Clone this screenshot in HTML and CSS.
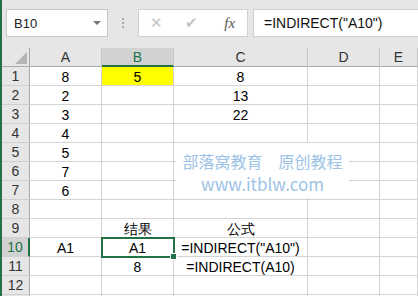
FILE: index.html
```html
<!DOCTYPE html>
<html lang="zh">
<head>
  <meta charset="utf-8">
  <title>INDIRECT</title>
  <link rel="stylesheet" href="styles.css">
</head>
<body>
  <div class="app">
    <div class="toolbar">
      <div class="namebox">
        <span>B10</span>
        <span class="arrow"></span>
      </div>
      <div class="dots"><i></i><i></i><i></i></div>
      <div class="buttons">
        <span class="btn">&#x2715;</span>
        <span class="btn">&#x2714;</span>
        <span class="btn fx">fx</span>
      </div>
      <div class="formula">=INDIRECT("A10")</div>
    </div>

    <div class="sheet">
      <div class="row head">
        <div class="rh corner"><span class="tri"></span></div>
        <div class="cell ca">A</div>
        <div class="cell cb active">B</div>
        <div class="cell cc">C</div>
        <div class="cell cd">D</div>
        <div class="cell ce">E</div>
      </div>
      <div class="row">
        <div class="rh">1</div>
        <div class="cell ca">8</div>
        <div class="cell cb yellow">5</div>
        <div class="cell cc">8</div>
        <div class="cell cd"></div>
        <div class="cell ce"></div>
      </div>
      <div class="row">
        <div class="rh">2</div>
        <div class="cell ca">2</div>
        <div class="cell cb"></div>
        <div class="cell cc">13</div>
        <div class="cell cd"></div>
        <div class="cell ce"></div>
      </div>
      <div class="row">
        <div class="rh">3</div>
        <div class="cell ca">3</div>
        <div class="cell cb"></div>
        <div class="cell cc">22</div>
        <div class="cell cd"></div>
        <div class="cell ce"></div>
      </div>
      <div class="row">
        <div class="rh">4</div>
        <div class="cell ca">4</div>
        <div class="cell cb"></div>
        <div class="cell cc"></div>
        <div class="cell cd"></div>
        <div class="cell ce"></div>
      </div>
      <div class="row">
        <div class="rh">5</div>
        <div class="cell ca">5</div>
        <div class="cell cb"></div>
        <div class="cell cc"></div>
        <div class="cell cd"></div>
        <div class="cell ce"></div>
      </div>
      <div class="row">
        <div class="rh">6</div>
        <div class="cell ca">7</div>
        <div class="cell cb"></div>
        <div class="cell cc"></div>
        <div class="cell cd"></div>
        <div class="cell ce"></div>
      </div>
      <div class="row">
        <div class="rh">7</div>
        <div class="cell ca">6</div>
        <div class="cell cb"></div>
        <div class="cell cc"></div>
        <div class="cell cd"></div>
        <div class="cell ce"></div>
      </div>
      <div class="row">
        <div class="rh">8</div>
        <div class="cell ca"></div>
        <div class="cell cb"></div>
        <div class="cell cc"></div>
        <div class="cell cd"></div>
        <div class="cell ce"></div>
      </div>
      <div class="row">
        <div class="rh">9</div>
        <div class="cell ca"></div>
        <div class="cell cb">结果</div>
        <div class="cell cc">公式</div>
        <div class="cell cd"></div>
        <div class="cell ce"></div>
      </div>
      <div class="row">
        <div class="rh active">10</div>
        <div class="cell ca">A1</div>
        <div class="cell cb selected">A1<span class="handle"></span></div>
        <div class="cell cc">=INDIRECT("A10")</div>
        <div class="cell cd"></div>
        <div class="cell ce"></div>
      </div>
      <div class="row">
        <div class="rh">11</div>
        <div class="cell ca"></div>
        <div class="cell cb">8</div>
        <div class="cell cc">=INDIRECT(A10)</div>
        <div class="cell cd"></div>
        <div class="cell ce"></div>
      </div>
      <div class="row">
        <div class="rh">12</div>
        <div class="cell ca"></div>
        <div class="cell cb"></div>
        <div class="cell cc"></div>
        <div class="cell cd"></div>
        <div class="cell ce"></div>
      </div>
      <div class="row">
        <div class="rh"></div>
        <div class="cell ca"></div>
        <div class="cell cb"></div>
        <div class="cell cc"></div>
        <div class="cell cd"></div>
        <div class="cell ce"></div>
      </div>

      <div class="watermark">
        <p class="wm-title">部落窝教育&emsp;原创教程</p>
        <p class="wm-url">www.itblw.com</p>
      </div>
    </div>
  </div>
</body>
</html>
```

FILE: styles.css
```css
body {
  margin: 0;
  background: #e6e6e6;
  font-family: "Liberation Sans", Arial, sans-serif;
  overflow: hidden;
}

.app {
  border-left: 2px solid #217346;
  height: 296px;
  overflow: hidden;
}

.toolbar {
  display: flex;
  align-items: center;
  height: 48px;
  padding-left: 4px;
  box-sizing: border-box;
  padding-bottom: 2px;
}

.namebox {
  display: flex;
  align-items: center;
  justify-content: space-between;
  box-sizing: border-box;
  width: 102px;
  height: 28px;
  padding: 0 6px 0 7px;
  background: #fff;
  border: 1px solid #c6c6c6;
  font-size: 13px;
  color: #222;
}

.arrow {
  width: 0;
  height: 0;
  border-left: 4px solid transparent;
  border-right: 4px solid transparent;
  border-top: 4px solid #777;
}

.dots {
  display: flex;
  flex-direction: column;
  gap: 2px;
  margin: 0 14px 0 14px;
}

.dots i {
  display: block;
  width: 2px;
  height: 2px;
  background: #a8a8a8;
}

.buttons {
  display: flex;
  align-items: center;
  box-sizing: border-box;
  width: 110px;
  height: 28px;
  background: #fff;
  border: 1px solid #d0d0d0;
}

.btn {
  width: 35px;
  text-align: center;
  color: #c4c4c4;
  font-size: 15px;
}

.btn.fx {
  font-family: "Liberation Serif", serif;
  font-style: italic;
  color: #555;
  font-size: 15px;
  padding-left: 4px;
}

.formula {
  flex: 1;
  display: flex;
  align-items: center;
  box-sizing: border-box;
  height: 28px;
  margin-left: 5px;
  padding-left: 10px;
  background: #fff;
  border: 1px solid #d0d0d0;
  border-right: none;
  font-size: 14px;
  color: #111;
}

.sheet {
  position: relative;
  background: #fff;
}

.row {
  display: flex;
  height: 19px;
}

.rh,
.cell {
  box-sizing: border-box;
  height: 19px;
  line-height: 19px;
  text-align: center;
  white-space: nowrap;
  font-size: 14px;
  color: #000;
}

.rh {
  width: 28px;
  flex: none;
  background: #e6e6e6;
  border-right: 1px solid #ababab;
  border-bottom: 1px solid #d0d0d0;
  color: #333;
}

.rh.active {
  background: #d2d2d2;
  border-right: 2px solid #217346;
  color: #217346;
}

.cell {
  flex: none;
  border-right: 1px solid #d4d4d4;
  border-bottom: 1px solid #d4d4d4;
  padding-top: 1px;
}

.ca { width: 72px; }
.cb { width: 72px; }
.cc { width: 134px; }
.cd { width: 72px; }
.ce { flex: 1; }

.head .cell {
  background: #e6e6e6;
  border-right: 1px solid #c6c6c6;
  border-bottom: 1px solid #ababab;
  color: #333;
  padding-top: 0;
}

.head .rh {
  border-bottom: 1px solid #ababab;
}

.head .cell.active {
  background: #d2d2d2;
  border-bottom: 2px solid #217346;
  color: #217346;
}

.corner {
  position: relative;
}

.tri {
  position: absolute;
  right: 2px;
  bottom: 2px;
  width: 0;
  height: 0;
  border-left: 12px solid transparent;
  border-bottom: 12px solid #b4b4b4;
}

.yellow {
  background: #ffff00;
}

.cell.selected {
  position: relative;
  outline: 2px solid #217346;
  outline-offset: -1px;
  z-index: 1;
}

.handle {
  position: absolute;
  right: -4px;
  bottom: -4px;
  width: 5px;
  height: 5px;
  background: #217346;
  border: 1px solid #fff;
}

.watermark {
  position: absolute;
  left: 174px;
  top: 95px;
  width: 173px;
  height: 55px;
  background: #fff;
  color: #9cc3e6;
  font-family: "Noto Sans CJK SC", "Microsoft YaHei", sans-serif;
  text-align: center;
  display: flex;
  flex-direction: column;
  align-items: center;
  padding-top: 9px;
  box-sizing: border-box;
  gap: 4px;
}

.watermark p {
  margin: 0;
}

.wm-title {
  font-size: 16px;
  line-height: 18px;
}

.wm-url {
  font-size: 17px;
  line-height: 20px;
}
```
